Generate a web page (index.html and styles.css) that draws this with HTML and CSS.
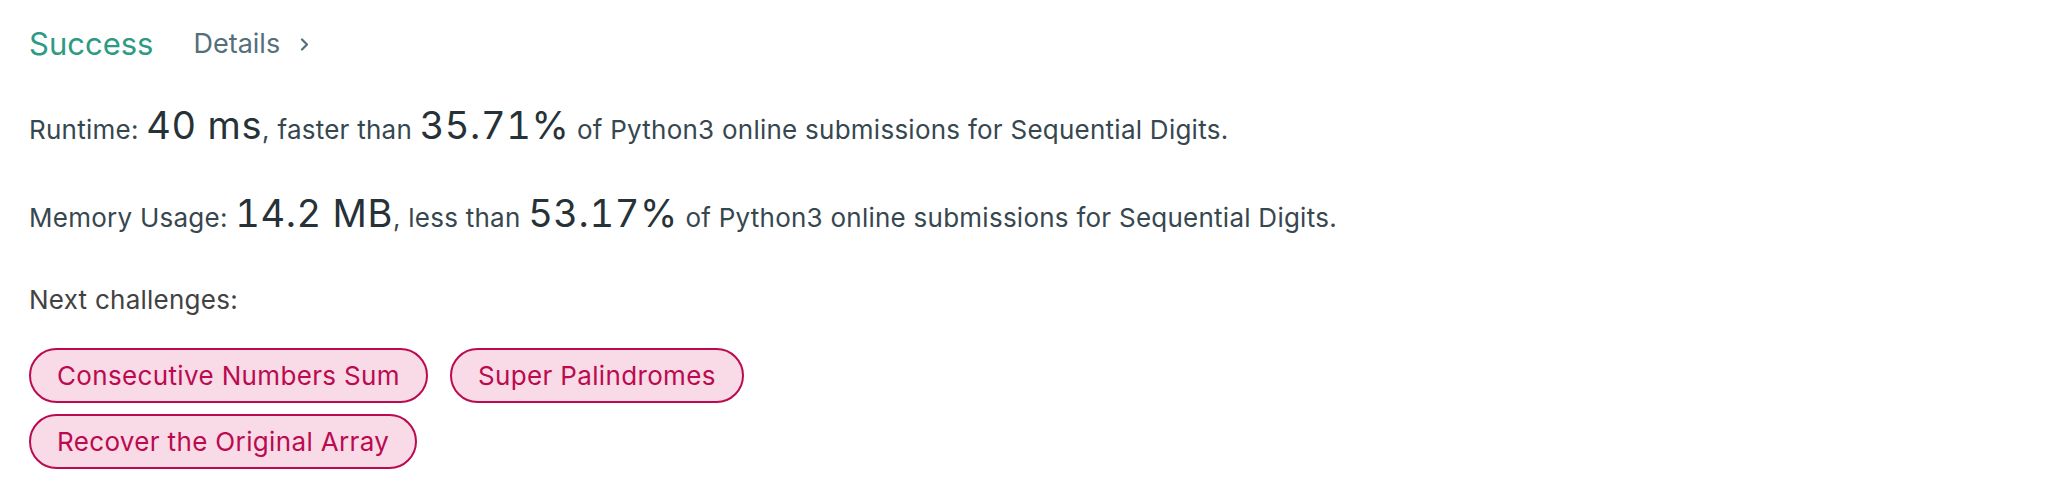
FILE: index.html
```html
<!DOCTYPE html>
<html>
<head>
<meta charset="utf-8">
<link rel="stylesheet" href="styles.css">
</head>
<body>
<div class="result">
  <div class="head">
    <span class="status">Success</span>
    <a class="details">Details
      <svg class="chev" width="9" height="13" viewBox="0 0 9 13"><path d="M2 1.5 L7 6.5 L2 11.5" fill="none" stroke="currentColor" stroke-width="2.2" stroke-linecap="round" stroke-linejoin="round"/></svg>
    </a>
  </div>
  <p class="stat">Runtime: <span class="big">40 ms</span>, faster than <span class="big">35.71%</span> of Python3 online submissions for Sequential Digits.</p>
  <p class="stat">Memory Usage: <span class="big">14.2 MB</span>, less than <span class="big">53.17%</span> of Python3 online submissions for Sequential Digits.</p>
  <p class="next">Next challenges:</p>
  <div class="pills">
    <a class="pill">Consecutive Numbers Sum</a>
    <a class="pill">Super Palindromes</a>
    <a class="pill">Recover the Original Array</a>
  </div>
</div>
</body>
</html>
```
FILE: styles.css
```css
html, body {
  margin: 0;
  padding: 0;
  background: #ffffff;
}
body {
  font-family: "Inter", "Liberation Sans", sans-serif;
}
.result {
  padding: 23px 0 0 29px;
}
.head {
  display: flex;
  align-items: center;
  height: 40px;
}
.status {
  font-size: 31px;
  color: #2d9b83;
}
.details {
  margin-left: 40px;
  font-size: 27px;
  color: #546e7a;
  display: inline-flex;
  align-items: center;
  gap: 20px;
}
.chev {
  display: block;
  margin-top: 2px;
}
.stat {
  margin: 0;
  font-size: 26px;
  letter-spacing: 0.25px;
  line-height: 40px;
  color: #37474f;
}
.stat:first-of-type {
  margin-top: 42px;
}
.stat + .stat {
  margin-top: 43px;
}
.big {
  font-size: 38px;
  line-height: 40px;
  letter-spacing: 0.6px;
  font-feature-settings: "tnum";
  color: #263238;
}
.next {
  margin: 42px 0 0;
  font-size: 26px;
  letter-spacing: 0.25px;
  line-height: 40px;
  color: #424242;
}
.pills {
  display: flex;
  flex-wrap: wrap;
  gap: 11px 22px;
  max-width: 800px;
  margin-top: 28px;
}
.pill {
  box-sizing: border-box;
  height: 55px;
  display: inline-flex;
  align-items: center;
  padding: 0 26px;
  border: 2px solid #bb0a50;
  border-radius: 28px;
  background: #f9dbe7;
  color: #bb0a50;
  font-size: 26px;
  letter-spacing: 0.35px;
}
```
